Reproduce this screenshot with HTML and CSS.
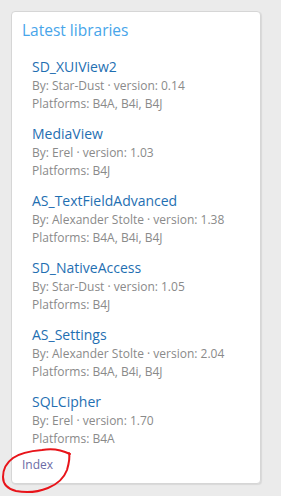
FILE: index.html
```html
<!DOCTYPE html>
<html>
    <head>
        <meta charset="UTF-8" />
        <title>Latest libraries</title>
        <link rel="stylesheet" href="styles.css">
    </head>
    <body>
        <div class="panel">
            <h3 class="panelTitle">Latest libraries</h3>
            <ul class="libList">
                <li class="lib">
                    <a class="libName" href="#">SD_XUIView2</a>
                    <div class="meta">By: Star-Dust · version: 0.14</div>
                    <div class="meta">Platforms: B4A, B4i, B4J</div>
                </li>
                <li class="lib">
                    <a class="libName" href="#">MediaView</a>
                    <div class="meta">By: Erel · version: 1.03</div>
                    <div class="meta">Platforms: B4J</div>
                </li>
                <li class="lib">
                    <a class="libName" href="#">AS_TextFieldAdvanced</a>
                    <div class="meta">By: Alexander Stolte · version: 1.38</div>
                    <div class="meta">Platforms: B4A, B4i, B4J</div>
                </li>
                <li class="lib">
                    <a class="libName" href="#">SD_NativeAccess</a>
                    <div class="meta">By: Star-Dust · version: 1.05</div>
                    <div class="meta">Platforms: B4J</div>
                </li>
                <li class="lib">
                    <a class="libName" href="#">AS_Settings</a>
                    <div class="meta">By: Alexander Stolte · version: 2.04</div>
                    <div class="meta">Platforms: B4A, B4i, B4J</div>
                </li>
                <li class="lib">
                    <a class="libName" href="#">SQLCipher</a>
                    <div class="meta">By: Erel · version: 1.70</div>
                    <div class="meta">Platforms: B4A</div>
                </li>
            </ul>
            <a class="indexLink" href="#">Index</a>
        </div>
        <svg class="scribble" width="80" height="50" viewBox="0 0 80 50">
            <path d="M70 8 C62 4 52 2 42 4 C30 5 20 7 13 12 C6 17 3 24 3 31 C3 38 8 43 16 45 C26 47 38 46 48 42 C58 38 64 32 67 24 C69 17 70 11 69 7" fill="none" stroke="#e8141a" stroke-width="2" stroke-linecap="round"/>
        </svg>
    </body>
</html>
```

FILE: styles.css
```css
body {
    margin: 0;
    padding: 11px 22px 15px 11px;
    background-color: #ebebeb;
    font-family: "Open Sans", "Noto Sans", sans-serif;
}
.panel {
    width: 228px;
    padding: 7px 10px 9px 10px;
    background-color: #fff;
    border: 1px solid #d6d6d6;
    border-radius: 4px;
    box-shadow: 1px 1px 1px rgba(0, 0, 0, 0.08);
}
.panelTitle {
    margin: 0 0 15px 0;
    font-size: 15.5px;
    font-weight: normal;
    line-height: 22px;
    color: #47a5ea;
}
.libList {
    list-style: none;
    margin: 0;
    padding: 0 0 0 10px;
}
.lib {
    margin-bottom: 11px;
}
.lib:last-child {
    margin-bottom: 5px;
}
.libName {
    display: block;
    font-size: 14px;
    line-height: 21px;
    color: #1f6fb2;
    text-decoration: none;
}
.meta {
    font-size: 12px;
    line-height: 17.5px;
    color: #8a8a8a;
}
.indexLink {
    display: inline-block;
    font-size: 12px;
    line-height: 18px;
    color: #6b6ba6;
    text-decoration: none;
}
.scribble {
    position: absolute;
    left: 0;
    top: 446px;
}
```
